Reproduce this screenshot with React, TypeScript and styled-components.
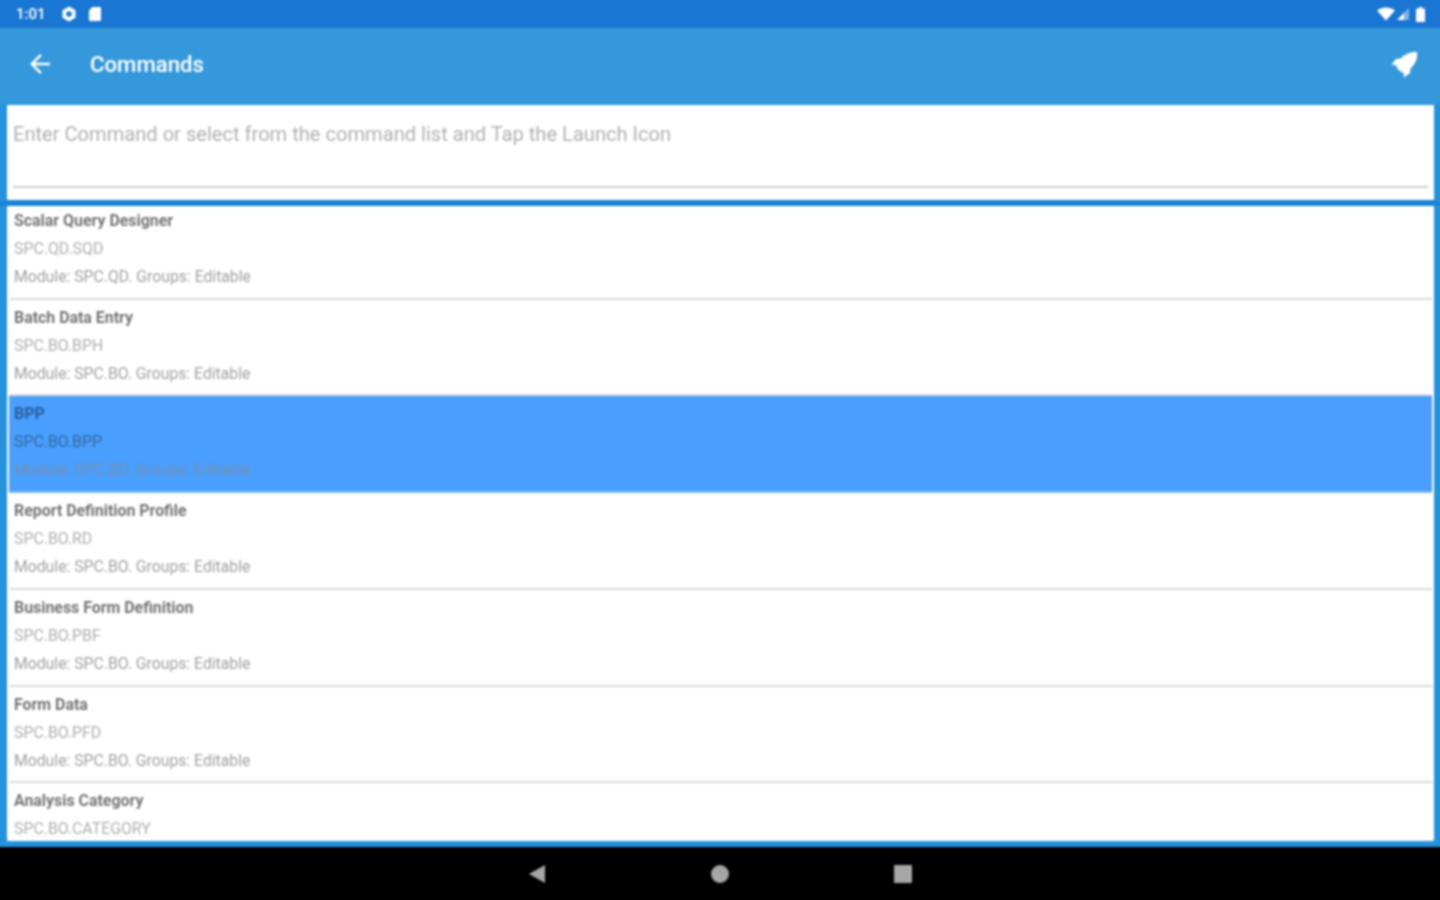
import React from "react";
import styled, { createGlobalStyle } from "styled-components";

const Global = createGlobalStyle`
  html, body { margin: 0; padding: 0; background: #000; overflow: hidden; height: 900px; }
  body { font-family: Roboto, "Liberation Sans", sans-serif; }
`;

/* 10px of bleed on every side keeps the soft-focus filter from fading the outer edges */
const Screen = styled.div`
  width: 1460px;
  height: 920px;
  margin: -10px 0 0 -10px;
  display: flex;
  flex-direction: column;
  overflow: hidden;
  background: #000;
  filter: blur(0.8px);
`;

const StatusBar = styled.div`
  height: 38px;
  box-sizing: border-box;
  flex: none;
  background: #1976d2;
  display: flex;
  align-items: center;
  padding: 10px 25px 0 26px;
  color: #fff;
`;

const Clock = styled.span`
  font-size: 15px;
  font-weight: 500;
  width: 45px;
`;

const StatusIcon = styled.svg<{ $gap?: number }>`
  display: block;
  fill: #fff;
  margin-right: ${(p) => p.$gap ?? 0}px;
`;

const Spacer = styled.div`
  flex: 1;
`;

const Toolbar = styled.div`
  height: 76px;
  box-sizing: border-box;
  flex: none;
  background: #3498db;
  display: flex;
  align-items: center;
  padding: 0 32px 4px 35px;
  color: #fff;
`;

const Title = styled.h1`
  margin: 0 0 0 35px;
  font-size: 22.2px;
  font-weight: 500;
  flex: 1;
`;

const Content = styled.div`
  flex: 1;
  min-height: 0;
  background: #2492dc;
  display: flex;
  flex-direction: column;
  padding: 1px 16px 0 17px;
`;

const InputCard = styled.div`
  height: 101px;
  flex: none;
  background: #fff;
  border-bottom: 6px solid #1a84d4;
  border-left: 17px solid #2492dc;
  border-right: 16px solid #2492dc;
  padding: 17px 6px 0;
  margin: 0 -16px 0 -17px;
  box-sizing: border-box;
  display: flex;
  flex-direction: column;
`;

const Placeholder = styled.div`
  font-size: 20.1px;
  line-height: 24px;
  color: #b0b0b0;
  flex: 1;
  border-bottom: 2px solid #d0d0d0;
  margin-bottom: 12px;
`;

const List = styled.div`
  flex: 1;
  min-height: 0;
  background: #fff;
  overflow: hidden;
  padding: 0 2px;
  box-shadow: inset 0 -2px 0 #ececec;
  margin-bottom: 6px;
`;

const Row = styled.div<{ $selected?: boolean }>`
  height: 96.8px;
  box-sizing: border-box;
  padding: 4px 5px 0;
  background: ${(p) => (p.$selected ? "#499efe" : "#fff")};
  border-bottom: 2px solid ${(p) => (p.$selected ? "#7fb7f0" : "#dadada")};
  &:first-child {
    margin-top: -3.3px;
  }
`;

const Name = styled.div<{ $selected?: boolean }>`
  font-size: 15.9px;
  line-height: 28px;
  font-weight: 700;
  color: ${(p) => (p.$selected ? "#2a5f9f" : "#747474")};
`;

const Code = styled.div<{ $selected?: boolean }>`
  font-size: 15.85px;
  line-height: 28px;
  color: ${(p) => (p.$selected ? "#34699f" : "#aeaeae")};
`;

const Meta = styled.div<{ $selected?: boolean }>`
  font-size: 15.75px;
  line-height: 28px;
  color: ${(p) => (p.$selected ? "#7690b2" : "#a0a0a0")};
`;

const NavBar = styled.div`
  height: 63px;
  box-sizing: border-box;
  padding-bottom: 10px;
  flex: none;
  background: #000;
  display: flex;
  align-items: center;
  justify-content: center;
  gap: 165px;
`;

const NavIcon = styled.svg`
  display: block;
  width: 18px;
  height: 20px;
  fill: #a6a6a6;
`;

const commands = [
  { name: "Scalar Query Designer", code: "SPC.QD.SQD", mod: "SPC.QD" },
  { name: "Batch Data Entry", code: "SPC.BO.BPH", mod: "SPC.BO" },
  { name: "BPP", code: "SPC.BO.BPP", mod: "SPC.BO", selected: true },
  { name: "Report Definition Profile", code: "SPC.BO.RD", mod: "SPC.BO" },
  { name: "Business Form Definition", code: "SPC.BO.PBF", mod: "SPC.BO" },
  { name: "Form Data", code: "SPC.BO.PFD", mod: "SPC.BO" },
  { name: "Analysis Category", code: "SPC.BO.CATEGORY" },
];

export default function App() {
  return (
    <Screen>
      <Global />
      <StatusBar>
        <Clock>1:01</Clock>
        <StatusIcon $gap={11} width="16" height="16" viewBox="0 0 16 16">
          <path fillRule="evenodd" d="M8 .5l6.5 3.75v7.5L8 15.5l-6.5-3.75v-7.5zM8 5.2a2.8 2.8 0 100 5.6 2.8 2.8 0 000-5.6z" />
        </StatusIcon>
        <StatusIcon width="14" height="16" viewBox="0 0 14 16">
          <path d="M4.5 1H12a1 1 0 011 1v12a1 1 0 01-1 1H2a1 1 0 01-1-1V4.5z" />
        </StatusIcon>
        <Spacer />
        <StatusIcon $gap={1} width="18" height="14" viewBox="0 0 18 14">
          <path d="M0 3.5C2.5 1.4 5.6.5 9 .5s6.5.9 9 3L9 13.5z" />
        </StatusIcon>
        <StatusIcon $gap={6} width="14" height="14" viewBox="0 0 14 14">
          <path d="M13 1v12H1z" opacity=".45" />
          <path d="M8 6v7H1z" />
        </StatusIcon>
        <StatusIcon width="9" height="15" viewBox="0 0 9 15">
          <path d="M3 0h3v1.5h2a1 1 0 011 1V14a1 1 0 01-1 1H1a1 1 0 01-1-1V2.5a1 1 0 011-1h2z" />
        </StatusIcon>
      </StatusBar>
      <Toolbar>
        <svg width="30" height="30" viewBox="0 0 24 24" fill="#fff">
          <path d="M20 11H7.83l5.59-5.59L12 4l-8 8 8 8 1.41-1.41L7.83 13H20v-2z" />
        </svg>
        <Title>Commands</Title>
        <svg width="27" height="27" viewBox="0 0 27 27" fill="#fff">
          <path d="M26 1C20 .5 14 3 9.5 7.5L5 8 .5 13.5 5.5 14.5 6 17 10 21 12.5 21.5 13 26.5 19 22 19.5 17.5C24.5 13 27 7 26 1Z" />
        </svg>
      </Toolbar>
      <Content>
        <InputCard>
          <Placeholder>Enter Command or select from the command list and Tap the Launch Icon</Placeholder>
        </InputCard>
        <List>
          {commands.map((c) => (
            <Row key={c.name} $selected={c.selected}>
              <Name $selected={c.selected}>{c.name}</Name>
              <Code $selected={c.selected}>{c.code}</Code>
              {c.mod && <Meta $selected={c.selected}>Module: {c.mod}. Groups: Editable</Meta>}
            </Row>
          ))}
        </List>
      </Content>
      <NavBar>
        <NavIcon viewBox="0 0 18 20">
          <path d="M17 1v18L1 10z" />
        </NavIcon>
        <NavIcon viewBox="0 0 18 20">
          <circle cx="9" cy="10" r="9" />
        </NavIcon>
        <NavIcon viewBox="0 0 18 20">
          <rect x="0" y="1" width="18" height="18" rx="1" />
        </NavIcon>
      </NavBar>
    </Screen>
  );
}
